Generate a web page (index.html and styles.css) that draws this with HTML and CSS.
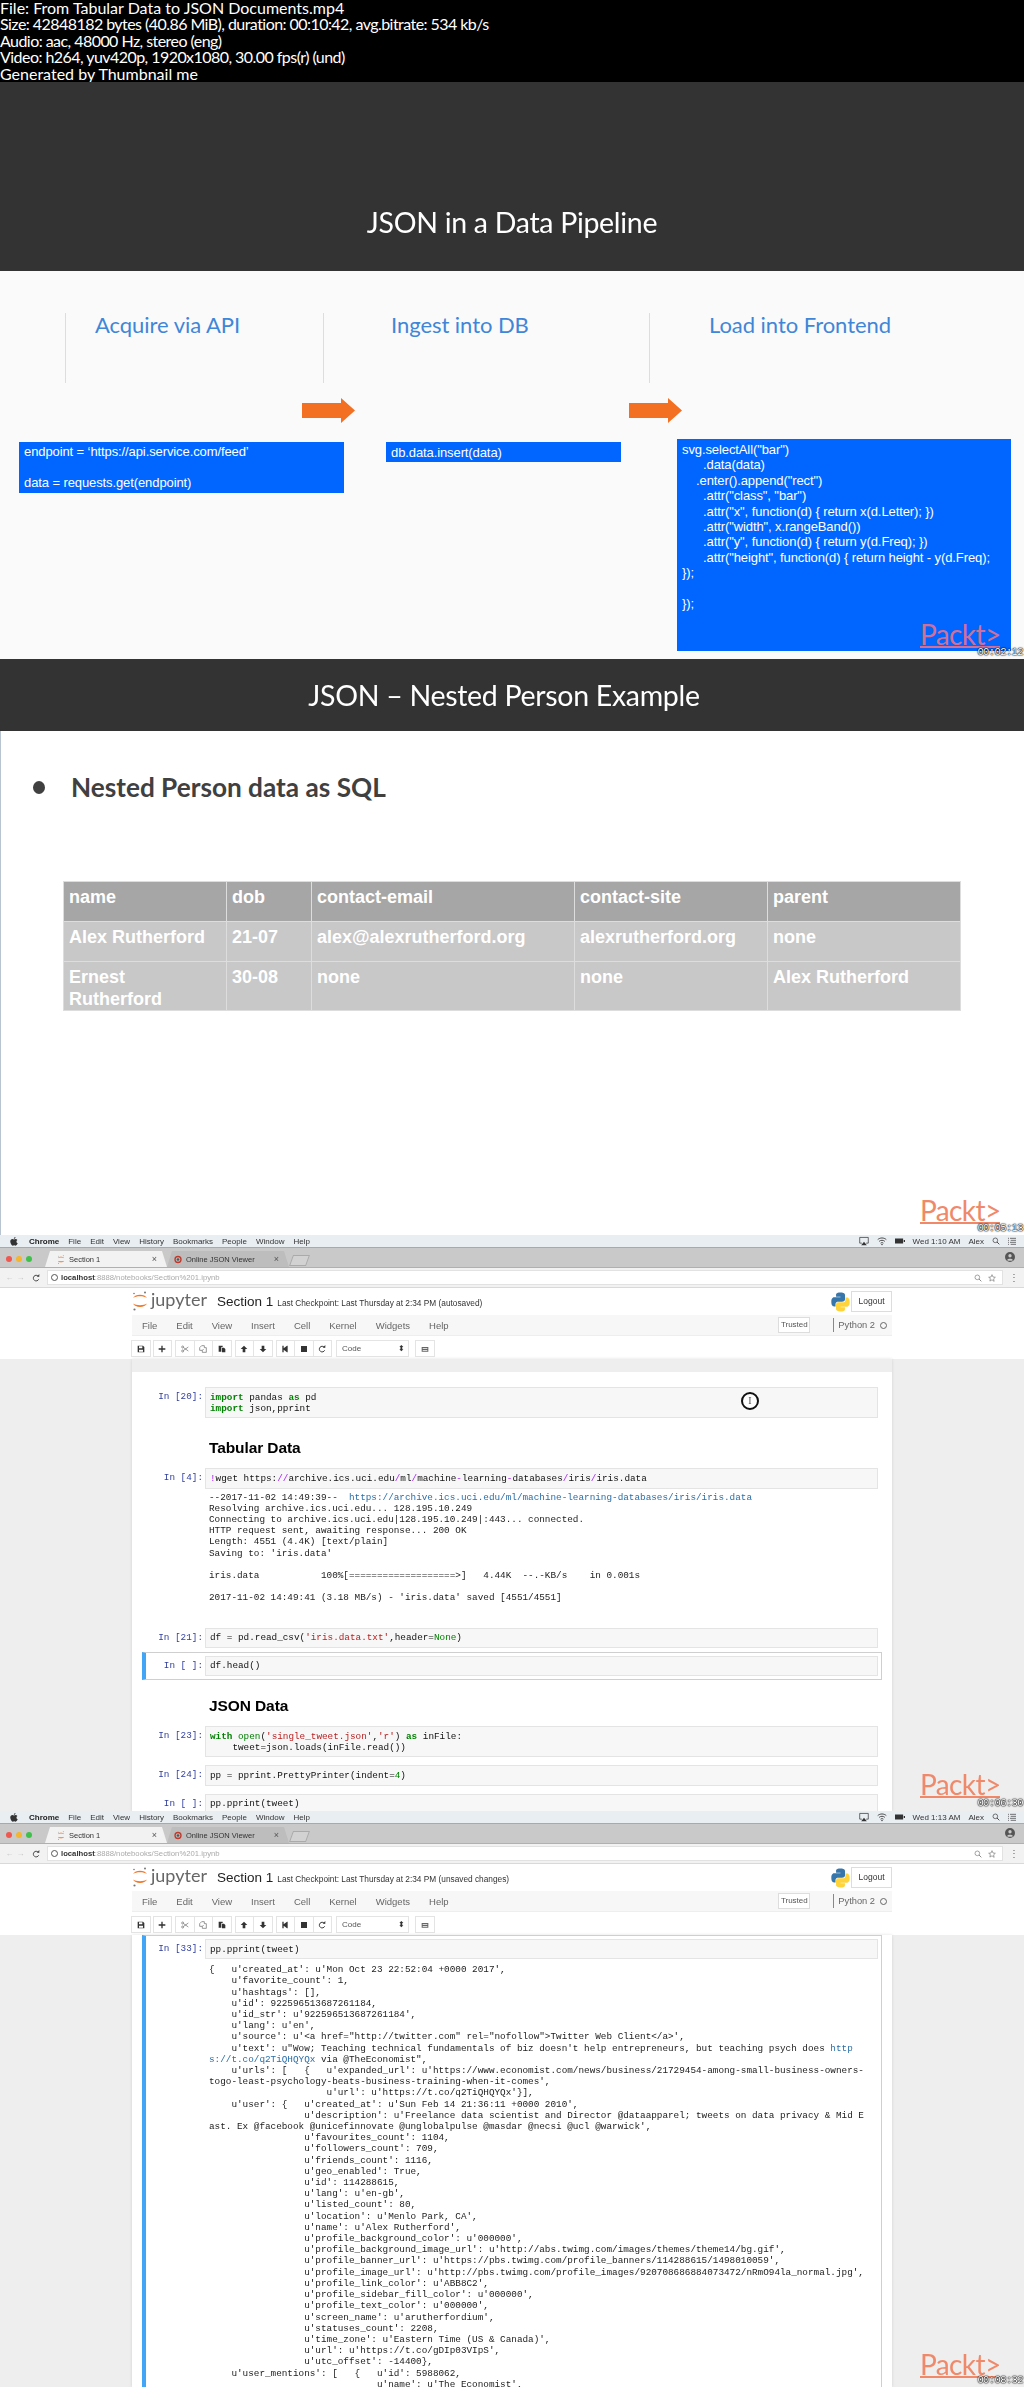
FILE: index.html
```html
<!DOCTYPE html>
<html lang="en">
<head>
<meta charset="UTF-8">
<title>From Tabular Data to JSON Documents.mp4</title>
<link rel="stylesheet" href="styles.css">
</head>
<body>

<svg class="sprites" width="0" height="0">
  <symbol id="i-apple" viewBox="0 0 20 24"><path d="M14 0c.2 2.600-2 5-4.500 4.800C9.300 2.500 11.700.2 14 0zM10 6.500c1.200 0 2.500-1.100 4.600-1.100 1.500 0 3.300.8 4.400 2.400-3.700 2.200-3.100 7.500.9 9-1 2.600-3.200 6.200-5.400 6.200-1.400 0-2.200-1-3.900-1-1.800 0-2.500 1-4 1C3.900 23 0 16.900 0 12.300 0 8 2.800 5.500 5.500 5.500c1.900 0 3.300 1 4.500 1z"/></symbol>
  <symbol id="i-jupyter" viewBox="0 0 16 20"><path fill="#f37726" d="M1 7C3 2.500 13 2.500 15 7 12 4.800 4 4.800 1 7zM1 12.500c3 2.200 11 2.200 14 0C13 17 3 17 1 12.500z"/><circle cx="13" cy="1.500" r="1" fill="#767677"/><circle cx="2" cy="2.500" r=".8" fill="#767677"/><circle cx="2.500" cy="18.500" r="1.100" fill="#767677"/></symbol>
  <symbol id="i-python" viewBox="0 0 24 24"><path fill="#3776ab" d="M11.900 0C6 0 6.400 2.600 6.400 2.600v2.700H12v.8H4.200S.4 5.700.4 11.800c0 6.100 3.300 5.900 3.300 5.900h2v-2.800s-.1-3.300 3.300-3.300h5.600s3.100 0 3.100-3V3.400S18.200 0 11.900 0z"/><path fill="#ffd43b" d="M12.100 24c5.900 0 5.500-2.600 5.500-2.600v-2.700H12v-.8h7.800s3.800.4 3.800-5.700c0-6.100-3.300-5.900-3.300-5.900h-2v2.800s.1 3.300-3.300 3.300H9.400s-3.100 0-3.100 3v5.200S5.800 24 12.100 24z"/></symbol>
  <symbol id="i-save" viewBox="0 0 12 12"><path d="M1 1h8l2 2v8H1zM3 2v3h5V2zM3 7v3h6V7z" fill-rule="evenodd"/></symbol>
  <symbol id="i-plus" viewBox="0 0 12 12"><path d="M5 1h2v4h4v2H7v4H5V7H1V5h4z"/></symbol>
  <symbol id="i-cut" viewBox="0 0 12 12"><circle cx="2.500" cy="3" r="1.500" fill="none" stroke="currentColor"/><circle cx="2.500" cy="9" r="1.500" fill="none" stroke="currentColor"/><path d="M4 4l7 5M4 8l7-5" stroke="currentColor" fill="none"/></symbol>
  <symbol id="i-copy" viewBox="0 0 12 12"><path d="M4 1h4v3h3v7H5V8H1V4zM5 8l2-2" fill="none" stroke="currentColor"/></symbol>
  <symbol id="i-paste" viewBox="0 0 12 12"><path d="M1 1h6v2H5v7H1zM6 4h3l2 2v5H6z"/></symbol>
  <symbol id="i-up" viewBox="0 0 12 12"><path d="M6 1l5 5H8v5H4V6H1z"/></symbol>
  <symbol id="i-down" viewBox="0 0 12 12"><path d="M6 11L1 6h3V1h4v5h3z"/></symbol>
  <symbol id="i-next" viewBox="0 0 12 12"><path d="M2 1h2v4l5-4h1v10H9L4 7v4H2z"/></symbol>
  <symbol id="i-stop" viewBox="0 0 12 12"><path d="M1.500 1.500h9v9h-9z"/></symbol>
  <symbol id="i-reload" viewBox="0 0 12 12"><path d="M9.500 3.500A4.200 4.200 0 1 0 10 8" fill="none" stroke="currentColor" stroke-width="1.500"/><path d="M7 4h4V0z"/></symbol>
  <symbol id="i-keys" viewBox="0 0 12 12"><path d="M1 3h10v7H1zM2.500 5h7v1h-7zM2.500 7.500h7v1h-7z" fill-rule="evenodd"/></symbol>
  <symbol id="i-airplay" viewBox="0 0 14 12"><path d="M1 1h12v8h-3M4 9H1V1" fill="none" stroke="currentColor"/><path d="M7 7l4 5H3z"/></symbol>
  <symbol id="i-wifi" viewBox="0 0 14 12"><path d="M1 4c3.500-3 8.500-3 12 0M3 6.500c2.500-2 5.500-2 8 0M5 9c1.200-1 2.800-1 4 0" fill="none" stroke="currentColor" stroke-width="1.200"/><circle cx="7" cy="11" r="1"/></symbol>
  <symbol id="i-battery" viewBox="0 0 16 10"><path d="M0 1h13v8H0zM14 3.500h2v3h-2z"/></symbol>
  <symbol id="i-search" viewBox="0 0 12 12"><circle cx="5" cy="5" r="3.500" fill="none" stroke="currentColor"/><path d="M7.500 7.500L11 11" stroke="currentColor" stroke-width="1.300"/></symbol>
  <symbol id="i-list" viewBox="0 0 12 12"><path d="M3 2h9M4 5h8M3 8h9M4 11h8M0 2h1.500M0 5h1.500M0 8h1.500M0 11h1.500" stroke="currentColor" fill="none"/></symbol>
  <symbol id="i-star" viewBox="0 0 12 12"><path d="M6 1l1.500 3.500 3.500.4-2.600 2.400.8 3.700L6 8.700 2.800 10.600l.8-3.700L1 4.900l3.500-.4z" fill="none" stroke="currentColor"/></symbol>
  <symbol id="i-user" viewBox="0 0 12 12"><path d="M6 0a6 6 0 1 0 0 12A6 6 0 0 0 6 0zm0 2.500a2 2 0 1 1 0 4 2 2 0 0 1 0-4zM2.500 9.500c1-2 6-2 7 0-1.500 1.500-5.500 1.500-7 0z" fill-rule="evenodd"/></symbol>
  <symbol id="i-chrome" viewBox="0 0 12 12"><circle cx="6" cy="6" r="4.500" fill="none" stroke="#c0392b" stroke-width="2"/><circle cx="6" cy="6" r="2" fill="#555"/></symbol>
</svg>

<header class="file-info">
  <div class="wide">File: From Tabular Data to JSON Documents.mp4</div>
  <div>Size: 42848182 bytes (40.86 MiB), duration: 00:10:42, avg.bitrate: 534 kb/s</div>
  <div>Audio: aac, 48000 Hz, stereo (eng)</div>
  <div>Video: h264, yuv420p, 1920x1080, 30.00 fps(r) (und)</div>
  <div class="wide">Generated by Thumbnail me</div>
</header>

<!-- frame 1 -->
<section class="frame">
  <div class="slide-head tall"><h1>JSON in a Data Pipeline</h1></div>
  <div class="slide-body pipeline">
    <div class="steps">
      <div class="step s1">Acquire via API</div>
      <div class="step s2">Ingest into DB</div>
      <div class="step s3">Load into Frontend</div>
    </div>
    <div class="arrows">
      <svg class="arrow" width="53" height="25" viewBox="0 0 53 25"><path d="M0 5h39V0l14 12.500L39 25v-5H0z"/></svg>
      <svg class="arrow" width="53" height="25" viewBox="0 0 53 25"><path d="M0 5h39V0l14 12.500L39 25v-5H0z"/></svg>
    </div>
    <div class="boxes">
      <pre class="box b1">endpoint = ‘https://api.service.com/feed’

data = requests.get(endpoint)</pre>
      <pre class="box b2">db.data.insert(data)</pre>
      <pre class="box b3">svg.selectAll("bar")
      .data(data)
    .enter().append("rect")
      .attr("class", "bar")
      .attr("x", function(d) { return x(d.Letter); })
      .attr("width", x.rangeBand())
      .attr("y", function(d) { return y(d.Freq); })
      .attr("height", function(d) { return height - y(d.Freq);
});

});</pre>
    </div>
    <div class="packt on-blue">Packt&gt;</div>
    <div class="stamp">00:02:12</div>
  </div>
</section>

<!-- frame 2 -->
<section class="frame">
  <div class="slide-head"><h1 class="h-nested">JSON – Nested Person Example</h1></div>
  <div class="slide-body nested">
    <div class="bullet-row"><span class="bullet"></span>Nested Person data as SQL</div>
    <table class="sql">
      <colgroup><col class="c1"><col class="c2"><col class="c3"><col class="c4"><col class="c5"></colgroup>
      <thead>
        <tr><th>name</th><th>dob</th><th>contact-email</th><th>contact-site</th><th>parent</th></tr>
      </thead>
      <tbody>
        <tr><td>Alex Rutherford</td><td>21-07</td><td>alex@alexrutherford.org</td><td>alexrutherford.org</td><td>none</td></tr>
        <tr><td>Ernest<br>Rutherford</td><td>30-08</td><td>none</td><td>none</td><td>Alex Rutherford</td></tr>
      </tbody>
    </table>
    <div class="packt">Packt&gt;</div>
    <div class="stamp">00:05:13</div>
  </div>
</section>

<!-- frame 3 -->
<section class="frame screen">
  <div class="mac-bar">
    <svg class="ic apple"><use href="#i-apple"/></svg>
    <b>Chrome</b><span>File</span><span>Edit</span><span>View</span><span>History</span><span>Bookmarks</span><span>People</span><span>Window</span><span>Help</span>
    <div class="mac-right">
      <svg class="ic"><use href="#i-airplay"/></svg><svg class="ic"><use href="#i-wifi"/></svg><svg class="ic"><use href="#i-battery"/></svg>
      <span>Wed 1:10 AM</span><span>Alex</span>
      <svg class="ic sm"><use href="#i-search"/></svg><svg class="ic sm"><use href="#i-list"/></svg>
    </div>
  </div>
  <div class="tabstrip">
    <i class="dot red"></i><i class="dot amber"></i><i class="dot green"></i>
    <div class="tab active"><svg class="ic tab-ic"><use href="#i-jupyter"/></svg><span>Section 1</span><em>×</em></div>
    <div class="tab"><svg class="ic tab-ic"><use href="#i-chrome"/></svg><span>Online JSON Viewer</span><em>×</em></div>
    <div class="tab-new"></div>
    <svg class="ic user"><use href="#i-user"/></svg>
  </div>
  <div class="urlrow">
    <span class="nav off">←</span><span class="nav off">→</span><svg class="ic sm nav-reload"><use href="#i-reload"/></svg>
    <div class="urlbox">
      <span class="info"></span><b>localhost</b><span class="url-rest">:8888/notebooks/Section%201.ipynb</span>
      <svg class="ic sm url-end"><use href="#i-search"/></svg><svg class="ic sm"><use href="#i-star"/></svg>
    </div>
    <span class="kebab">⋮</span>
  </div>
  <div class="nb-header">
    <div class="nb-top">
      <svg class="jlogo"><use href="#i-jupyter"/></svg><span class="jname">jupyter</span>
      <span class="nb-title">Section 1</span><span class="nb-check">Last Checkpoint: Last Thursday at 2:34 PM (autosaved)</span>
      <svg class="pylogo"><use href="#i-python"/></svg><span class="logout">Logout</span>
    </div>
    <div class="nb-menu">
      <span>File</span><span>Edit</span><span>View</span><span>Insert</span><span>Cell</span><span>Kernel</span><span>Widgets</span><span>Help</span>
      <span class="trusted">Trusted</span><span class="kernel">Python 2</span><i class="kernel-dot"></i>
    </div>
    <div class="nb-tools">
      <div class="btn"><svg class="ic tl"><use href="#i-save"/></svg></div>
      <div class="btn"><svg class="ic tl"><use href="#i-plus"/></svg></div>
      <div class="btns"><div class="btn"><svg class="ic tl lite"><use href="#i-cut"/></svg></div><div class="btn"><svg class="ic tl lite"><use href="#i-copy"/></svg></div><div class="btn"><svg class="ic tl"><use href="#i-paste"/></svg></div></div>
      <div class="btns"><div class="btn"><svg class="ic tl"><use href="#i-up"/></svg></div><div class="btn"><svg class="ic tl"><use href="#i-down"/></svg></div></div>
      <div class="btns"><div class="btn"><svg class="ic tl"><use href="#i-next"/></svg></div><div class="btn"><svg class="ic tl"><use href="#i-stop"/></svg></div><div class="btn"><svg class="ic tl"><use href="#i-reload"/></svg></div></div>
      <div class="select"><span>Code</span><span class="updown">⬍</span></div>
      <div class="btn"><svg class="ic tl lite"><use href="#i-keys"/></svg></div>
    </div>
  </div>
  <div class="nb-page">
    <div class="notebook first">
      <div class="cell">
        <div class="prompt">In [20]:</div>
        <div class="cell-main"><pre class="input"><span class="kw">import</span> pandas <span class="kw">as</span> pd
<span class="kw">import</span> json,pprint</pre></div>
      </div>
      <h2 class="md">Tabular Data</h2>
      <div class="cell">
        <div class="prompt">In [4]:</div>
        <div class="cell-main">
          <pre class="input"><span class="op">!</span>wget https:<span class="op">//</span>archive.ics.uci.edu<span class="op">/</span>ml<span class="op">/</span>machine<span class="op">-</span>learning<span class="op">-</span>databases<span class="op">/</span>iris<span class="op">/</span>iris.data</pre>
          <pre class="output tail">--2017-11-02 14:49:39--  <span class="lnk">https://archive.ics.uci.edu/ml/machine-learning-databases/iris/iris.data</span>
Resolving archive.ics.uci.edu... 128.195.10.249
Connecting to archive.ics.uci.edu|128.195.10.249|:443... connected.
HTTP request sent, awaiting response... 200 OK
Length: 4551 (4.4K) [text/plain]
Saving to: 'iris.data'

iris.data           100%[===================>]   4.44K  --.-KB/s    in 0.001s

2017-11-02 14:49:41 (3.18 MB/s) - 'iris.data' saved [4551/4551]</pre>
        </div>
      </div>
      <div class="cell">
        <div class="prompt">In [21]:</div>
        <div class="cell-main"><pre class="input">df = pd.read_csv(<span class="str">'iris.data.txt'</span>,header=<span class="bi">None</span>)</pre></div>
      </div>
      <div class="cell selected">
        <div class="prompt">In [ ]:</div>
        <div class="cell-main"><pre class="input">df.head()</pre></div>
      </div>
      <h2 class="md">JSON Data</h2>
      <div class="cell">
        <div class="prompt">In [23]:</div>
        <div class="cell-main"><pre class="input"><span class="kw">with</span> <span class="bi">open</span>(<span class="str">'single_tweet.json'</span>,<span class="str">'r'</span>) <span class="kw">as</span> inFile:
    tweet=json.loads(inFile.read())</pre></div>
      </div>
      <div class="cell">
        <div class="prompt">In [24]:</div>
        <div class="cell-main"><pre class="input">pp = pprint.PrettyPrinter(indent=<span class="bi">4</span>)</pre></div>
      </div>
      <div class="cell">
        <div class="prompt">In [ ]:</div>
        <div class="cell-main"><pre class="input">pp.pprint(tweet)</pre></div>
      </div>
    </div>
    <div class="cursor">I</div>
  </div>
  <div class="packt p3">Packt&gt;</div>
  <div class="stamp st3">00:06:30</div>
</section>

<!-- frame 4 -->
<section class="frame screen">
  <div class="mac-bar">
    <svg class="ic apple"><use href="#i-apple"/></svg>
    <b>Chrome</b><span>File</span><span>Edit</span><span>View</span><span>History</span><span>Bookmarks</span><span>People</span><span>Window</span><span>Help</span>
    <div class="mac-right">
      <svg class="ic"><use href="#i-airplay"/></svg><svg class="ic"><use href="#i-wifi"/></svg><svg class="ic"><use href="#i-battery"/></svg>
      <span>Wed 1:13 AM</span><span>Alex</span>
      <svg class="ic sm"><use href="#i-search"/></svg><svg class="ic sm"><use href="#i-list"/></svg>
    </div>
  </div>
  <div class="tabstrip">
    <i class="dot red"></i><i class="dot amber"></i><i class="dot green"></i>
    <div class="tab active"><svg class="ic tab-ic"><use href="#i-jupyter"/></svg><span>Section 1</span><em>×</em></div>
    <div class="tab"><svg class="ic tab-ic"><use href="#i-chrome"/></svg><span>Online JSON Viewer</span><em>×</em></div>
    <div class="tab-new"></div>
    <svg class="ic user"><use href="#i-user"/></svg>
  </div>
  <div class="urlrow">
    <span class="nav off">←</span><span class="nav off">→</span><svg class="ic sm nav-reload"><use href="#i-reload"/></svg>
    <div class="urlbox">
      <span class="info"></span><b>localhost</b><span class="url-rest">:8888/notebooks/Section%201.ipynb</span>
      <svg class="ic sm url-end"><use href="#i-search"/></svg><svg class="ic sm"><use href="#i-star"/></svg>
    </div>
    <span class="kebab">⋮</span>
  </div>
  <div class="nb-header">
    <div class="nb-top">
      <svg class="jlogo"><use href="#i-jupyter"/></svg><span class="jname">jupyter</span>
      <span class="nb-title">Section 1</span><span class="nb-check">Last Checkpoint: Last Thursday at 2:34 PM (unsaved changes)</span>
      <svg class="pylogo"><use href="#i-python"/></svg><span class="logout">Logout</span>
    </div>
    <div class="nb-menu">
      <span>File</span><span>Edit</span><span>View</span><span>Insert</span><span>Cell</span><span>Kernel</span><span>Widgets</span><span>Help</span>
      <span class="trusted">Trusted</span><span class="kernel">Python 2</span><i class="kernel-dot"></i>
    </div>
    <div class="nb-tools">
      <div class="btn"><svg class="ic tl"><use href="#i-save"/></svg></div>
      <div class="btn"><svg class="ic tl"><use href="#i-plus"/></svg></div>
      <div class="btns"><div class="btn"><svg class="ic tl lite"><use href="#i-cut"/></svg></div><div class="btn"><svg class="ic tl lite"><use href="#i-copy"/></svg></div><div class="btn"><svg class="ic tl"><use href="#i-paste"/></svg></div></div>
      <div class="btns"><div class="btn"><svg class="ic tl"><use href="#i-up"/></svg></div><div class="btn"><svg class="ic tl"><use href="#i-down"/></svg></div></div>
      <div class="btns"><div class="btn"><svg class="ic tl"><use href="#i-next"/></svg></div><div class="btn"><svg class="ic tl"><use href="#i-stop"/></svg></div><div class="btn"><svg class="ic tl"><use href="#i-reload"/></svg></div></div>
      <div class="select"><span>Code</span><span class="updown">⬍</span></div>
      <div class="btn"><svg class="ic tl lite"><use href="#i-keys"/></svg></div>
    </div>
  </div>
  <div class="nb-page">
    <div class="notebook">
      <div class="cell selected">
        <div class="prompt">In [33]:</div>
        <div class="cell-main">
          <pre class="input">pp.pprint(tweet)</pre>
          <pre class="output gap">{   u'created_at': u'Mon Oct 23 22:52:04 +0000 2017',
    u'favorite_count': 1,
    u'hashtags': [],
    u'id': 922596513687261184,
    u'id_str': u'922596513687261184',
    u'lang': u'en',
    u'source': u'&lt;a href="http://twitter.com" rel="nofollow"&gt;Twitter Web Client&lt;/a&gt;',
    u'text': u"Wow; Teaching technical fundamentals of biz doesn't help entrepreneurs, but teaching psych does <span class="lnk">http</span>
<span class="lnk">s://t.co/q2TiQHQYQx</span> via @TheEconomist",
    u'urls': [   {   u'expanded_url': u'https://www.economist.com/news/business/21729454-among-small-business-owners-
togo-least-psychology-beats-business-training-when-it-comes',
                     u'url': u'https://t.co/q2TiQHQYQx'}],
    u'user': {   u'created_at': u'Sun Feb 14 21:36:11 +0000 2010',
                 u'description': u'Freelance data scientist and Director @dataapparel; tweets on data privacy &amp; Mid E
ast. Ex @facebook @unicefinnovate @unglobalpulse @masdar @necsi @ucl @warwick',
                 u'favourites_count': 1104,
                 u'followers_count': 709,
                 u'friends_count': 1116,
                 u'geo_enabled': True,
                 u'id': 114288615,
                 u'lang': u'en-gb',
                 u'listed_count': 80,
                 u'location': u'Menlo Park, CA',
                 u'name': u'Alex Rutherford',
                 u'profile_background_color': u'000000',
                 u'profile_background_image_url': u'http://abs.twimg.com/images/themes/theme14/bg.gif',
                 u'profile_banner_url': u'https://pbs.twimg.com/profile_banners/114288615/1498010059',
                 u'profile_image_url': u'http://pbs.twimg.com/profile_images/920708686884073472/nRmO94la_normal.jpg',
                 u'profile_link_color': u'ABB8C2',
                 u'profile_sidebar_fill_color': u'000000',
                 u'profile_text_color': u'000000',
                 u'screen_name': u'arutherfordium',
                 u'statuses_count': 2208,
                 u'time_zone': u'Eastern Time (US &amp; Canada)',
                 u'url': u'https://t.co/gDIp03VIpS',
                 u'utc_offset': -14400},
    u'user_mentions': [   {   u'id': 5988062,
                              u'name': u'The Economist',</pre>
        </div>
      </div>
    </div>
  </div>
  <div class="packt p4">Packt&gt;</div>
  <div class="stamp st4">00:08:32</div>
</section>

</body>
</html>
```

FILE: styles.css
```css
/* contact sheet: 4 video frames stacked under the file info */
*{box-sizing:border-box;}
html,body{margin:0;padding:0;}
body{width:1024px;height:2387px;overflow:hidden;background:#000;font-family:"Liberation Sans",Arial,sans-serif;}
pre{margin:0;}
.sprites{position:absolute;}

.file-info{height:82px;background:#000;color:#fff;font:16px/16.4px Lato,sans-serif;letter-spacing:-.55px;white-space:nowrap;}
.file-info .wide{letter-spacing:0;}

.frame{position:relative;overflow:hidden;filter:blur(.35px);}

/* slides */
.slide-head{height:72px;background:#333;display:flex;align-items:center;justify-content:center;color:#fff;box-shadow:0 1px 3px rgba(0,0,0,.4);position:relative;}
.slide-head h1{margin:0;font:400 28.500px Lato,sans-serif;letter-spacing:-.3px;}
.slide-head .h-nested{margin-left:-16px;}
.slide-head.tall{height:189px;align-items:flex-end;padding-bottom:32px;}
.slide-body{position:relative;}

.pipeline{height:388px;background:#fafafa;padding-top:42px;}
.steps{display:flex;padding-left:65px;height:70px;}
.step{border-left:1px solid #ddd;color:#3f86d8;font:22px/24px Lato,sans-serif;letter-spacing:-.05px;}
.s1{width:258px;padding-left:29px;}
.s2{width:326px;padding-left:67px;}
.s3{padding-left:59px;}
.arrows{display:flex;gap:274px;padding-left:302px;margin-top:15px;}
.arrow{fill:#f36f21;display:block;}
.boxes{display:flex;margin-top:16px;align-items:flex-start;padding-left:19px;}
.box{background:#0066ff;color:#fff;font:13px/15.400px "Liberation Sans",Arial,sans-serif;padding:3px 5px;letter-spacing:-.1px;}
.b1{width:325px;height:51px;margin-top:3px;padding-top:2px;}
.b2{width:235px;height:20px;margin:3px 0 0 42px;padding-top:3px;}
.b3{width:334px;height:212px;margin-left:56px;padding-top:3px;}

.nested{height:504px;background:#fff;border-left:1px solid #b8c4d0;padding-top:36px;}
.bullet-row{display:flex;align-items:center;height:40px;padding-left:32px;font:700 26.200px/40px Lato,sans-serif;color:#404040;}
.bullet{width:12px;height:13px;border-radius:50%;background:#404040;margin-right:26px;}
.sql{margin:74px 0 0 62px;border-collapse:collapse;table-layout:fixed;width:897px;color:#fff;font:700 18px/22px "Liberation Sans",Arial,sans-serif;}
.sql th,.sql td{border:1px solid #ddd;padding:4px 5px 0;text-align:left;vertical-align:top;}
.sql th{background:#a6a6a6;height:40px;font-weight:700;}
.sql td{background:#c8c8c8;height:40px;}
.sql .c1{width:163px;}.sql .c2{width:85px;}.sql .c3{width:263px;}.sql .c4{width:193px;}.sql .c5{width:193px;}

/* overlays burned into the video */
.packt{position:absolute;right:24px;bottom:11px;width:80px;height:26px;border-bottom:2px solid #f0896a;color:#f0896a;font:400 28px/24px Lato,sans-serif;letter-spacing:-.6px;text-align:center;white-space:nowrap;}
.packt.on-blue{color:#d0709a;border-color:#d0709a;}
.packt.p3{bottom:13px;}
.packt.p4{bottom:9px;}
.stamp{position:absolute;right:1px;bottom:1px;color:#fff;font:10.500px/12px "Liberation Mono",monospace;letter-spacing:-.6px;text-shadow:0 0 1px #000,0 0 1px #000,0 0 2px #000;}
.stamp.st3{bottom:2px;}

/* browser chrome */
.screen{height:576px;background:#eee;}
.ic{width:10px;height:10px;fill:currentColor;display:block;flex:none;}
.ic.sm{width:8px;height:8px;}
.mac-bar{height:12px;background:#e9eef3;display:flex;align-items:center;padding-left:10px;color:#333;font-size:8px;gap:9px;white-space:nowrap;}
.mac-bar .apple{width:8px;height:9px;margin-right:2px;}
.mac-bar b{color:#222;}
.mac-right{margin-left:auto;display:flex;align-items:center;gap:8px;padding-right:8px;}
.tabstrip{height:21px;background:#c9c9c9;border-top:1px solid #a9a9a9;border-bottom:1px solid #b0b0b0;display:flex;align-items:flex-end;padding-left:6px;position:relative;}
.dot{width:6px;height:6px;border-radius:50%;margin:0 4px 5px 0;flex:none;}
.red{background:#f0574e;}.amber{background:#f5b52e;}.green{background:#3fc04a;}
.tab{width:122px;height:16px;display:flex;align-items:center;padding:0 10px 0 7px;font-size:7.500px;color:#333;background:#bdbdbd;gap:4px;clip-path:polygon(0 100%,5px 0,calc(100% - 5px) 0,100% 100%);}
.tab.active{background:#f2f2f2;margin-left:9px;padding-left:12px;}
.tab em{margin-left:auto;font-style:normal;font-size:9px;color:#555;}
.tab-ic{width:8px;height:9px;}
.tab-new{width:17px;height:11px;margin:0 0 1px 2px;background:#d2d2d2;border:1px solid #aaa;transform:skewX(-20deg);}
.user{position:absolute;right:9px;top:4px;color:#555;}
.urlrow{height:20px;background:#f2f2f2;border-bottom:1px solid #ddd;display:flex;align-items:center;padding-left:4px;font-size:8px;}
.nav{width:11px;text-align:center;}
.nav.off{color:#c4c4c4;}
.nav-reload{margin:0 7px 0 6px;color:#444;}
.urlbox{width:956px;height:15px;background:#fff;border:1px solid #e2e2e2;display:flex;align-items:center;padding:0 6px 0 3px;color:#333;font-size:7.700px;white-space:nowrap;gap:0;}
.info{width:7px;height:7px;border:1px solid #555;border-radius:50%;margin-right:3px;}
.url-rest{color:#aaa;}
.url-end{margin-left:auto;margin-right:6px;color:#999;}
.urlbox .ic{color:#777;}
.kebab{margin-left:6px;color:#666;font-size:10px;}

/* jupyter header */
.nb-header{height:71px;background:#fff;box-shadow:0 1px 2px rgba(0,0,0,.25);padding:0 132px;position:relative;}
.nb-top{height:27px;display:flex;align-items:center;white-space:nowrap;}
.jlogo{width:16px;height:20px;flex:none;margin-bottom:1px;}
.jname{font:18px/20px Lato,sans-serif;color:#666;margin:0 0 5px 3px;}
.nb-title{font-size:13.500px;color:#222;margin-left:10px;}
.nb-check{font-size:8.300px;color:#333;margin:2px 0 0 4px;}
.pylogo{width:19px;height:20px;margin-left:auto;flex:none;}
.logout{width:41px;height:21px;border:1px solid #ddd;background:#fff;font-size:8.500px;line-height:19px;text-align:center;color:#333;margin-left:1px;}
.nb-menu{height:21px;background:#f7f7f7;border-bottom:1px solid #eee;display:flex;align-items:center;padding-left:10px;font-size:9.500px;color:#666;}
.nb-menu span{margin-right:19px;}
.nb-menu .trusted{margin:0 0 0 auto;width:32px;height:16px;background:#fff;border:1px solid #ddd;font-size:8px;line-height:14px;text-align:center;color:#555;}
.nb-menu .kernel{margin:0 0 0 23px;border-left:1px solid #888;padding-left:4px;height:14px;line-height:14px;font-size:9.300px;}
.kernel-dot{width:7px;height:7px;border:1px solid #666;border-radius:50%;margin:0 5px 0 5px;}
.nb-tools{display:flex;gap:3px;margin-top:4px;height:17px;}
.btn{width:19.500px;height:17px;border:1px solid #e4e4e4;background:#fff;display:flex;align-items:center;justify-content:center;color:#333;margin-left:-1px;}
.btns{display:flex;margin-left:1px;}
.tl{width:8px;height:8px;}
.tl.lite{color:#666;}
.select{width:73px;height:17px;border:1px solid #e4e4e4;font-size:8px;color:#555;display:flex;align-items:center;justify-content:space-between;padding:0 3px 0 5px;margin:0 4px 0 1px;}
.updown{font-size:8px;color:#333;}

/* notebook */
.nb-page{position:relative;height:452px;background:#eee;}
.notebook{width:760px;height:100%;margin-left:132px;background:#fff;box-shadow:0 0 3px rgba(0,0,0,.12);overflow:hidden;}
.notebook.first{border-top:13px solid #eee;padding-top:11px;background-clip:padding-box;}
.cell{display:flex;margin:0 10px;padding:3px;border:1px solid transparent;border-left-width:4px;}
.cell.selected{border-color:#cfcfcf;border-left-color:#42a5f5;}
.prompt{width:56px;flex:none;padding:4px 2px 0 0;text-align:right;font:9.330px/11.200px "Liberation Mono",monospace;color:#303f9f;white-space:pre;}
.cell-main{flex:1;min-width:0;}
.input,.output{font:9.330px/11.200px "Liberation Mono",monospace;color:#111;white-space:pre;}
.input{background:#f7f7f7;border:1px solid #e4e4e4;padding:3.500px 4px;}
.output{padding:0 0 0 4px;color:#222;}
.output.tail{margin-top:3px;padding-bottom:16px;}
.output.gap{margin-top:5px;}
.kw{color:#008000;font-weight:700;}
.bi{color:#008000;}
.str{color:#ba2121;}
.op{color:#a2f;}
.lnk{color:#296eaa;}
.md{margin:0;height:42px;padding:13px 0 0 77px;font:700 15.500px/26px "Liberation Sans",Arial,sans-serif;color:#000;letter-spacing:-.1px;}
.cursor{position:absolute;left:741px;top:33px;width:18px;height:18px;border:2px solid #111;border-radius:50%;background:#fff;font:10px/14px "Liberation Serif",serif;text-align:center;color:#555;}
```
